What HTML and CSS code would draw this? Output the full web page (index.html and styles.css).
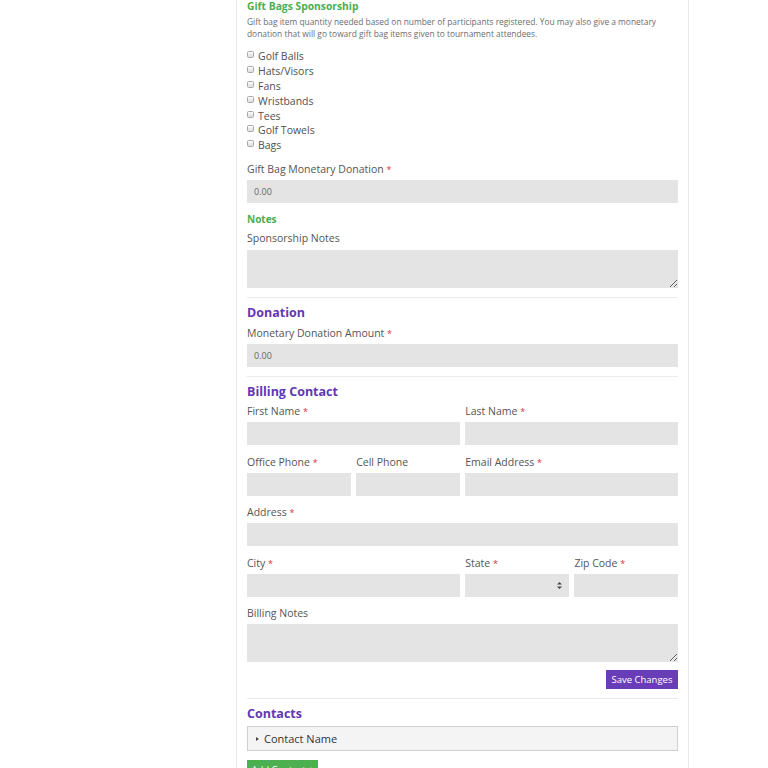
FILE: index.html
```html
<!DOCTYPE html>
<html>
<head>
<meta charset="utf-8">
<link rel="stylesheet" href="styles.css">
</head>
<body>
<div class="page">
  <aside class="side"></aside>
  <main class="panel">
    <h4 class="sub-green">Gift Bags Sponsorship</h4>
    <p class="desc">Gift bag item quantity needed based on number of participants registered. You may also give a monetary donation that will go toward gift bag items given to tournament attendees.</p>
    <ul class="checks">
      <li><span class="box"></span>Golf Balls</li>
      <li><span class="box"></span>Hats/Visors</li>
      <li><span class="box"></span>Fans</li>
      <li><span class="box"></span>Wristbands</li>
      <li><span class="box"></span>Tees</li>
      <li><span class="box"></span>Golf Towels</li>
      <li><span class="box"></span>Bags</li>
    </ul>
    <div class="group g-gift">
      <label class="lbl">Gift Bag Monetary Donation <span class="req">*</span></label>
      <input class="field" type="text" value="0.00">
    </div>
    <h5 class="sub-green small">Notes</h5>
    <div class="group g-notes">
      <label class="lbl">Sponsorship Notes</label>
      <textarea class="field area"></textarea>
    </div>
    <hr class="sep">
    <h3 class="sec">Donation</h3>
    <div class="group g-don">
      <label class="lbl">Monetary Donation Amount <span class="req">*</span></label>
      <input class="field" type="text" value="0.00">
    </div>
    <hr class="sep">
    <h3 class="sec">Billing Contact</h3>
    <div class="grid">
      <div class="group span2">
        <label class="lbl">First Name <span class="req">*</span></label>
        <input class="field" type="text">
      </div>
      <div class="group span2">
        <label class="lbl">Last Name <span class="req">*</span></label>
        <input class="field" type="text">
      </div>
      <div class="group">
        <label class="lbl">Office Phone <span class="req">*</span></label>
        <input class="field" type="text">
      </div>
      <div class="group">
        <label class="lbl">Cell Phone</label>
        <input class="field" type="text">
      </div>
      <div class="group span2">
        <label class="lbl">Email Address <span class="req">*</span></label>
        <input class="field" type="text">
      </div>
      <div class="group span4">
        <label class="lbl">Address <span class="req">*</span></label>
        <input class="field" type="text">
      </div>
      <div class="group span2">
        <label class="lbl">City <span class="req">*</span></label>
        <input class="field" type="text">
      </div>
      <div class="group">
        <label class="lbl">State <span class="req">*</span></label>
        <div class="field select">
          <svg class="arrows" width="5" height="7" viewBox="0 0 5 7"><path d="M2.5 0 L5 2.6 L0 2.6 Z M2.5 7 L5 4.4 L0 4.4 Z" fill="#444"/></svg>
        </div>
      </div>
      <div class="group">
        <label class="lbl">Zip Code <span class="req">*</span></label>
        <input class="field" type="text">
      </div>
      <div class="group span4 last">
        <label class="lbl">Billing Notes</label>
        <textarea class="field area"></textarea>
      </div>
    </div>
    <div class="actions">
      <button class="btn btn-purple">Save Changes</button>
    </div>
    <hr class="sep">
    <h3 class="sec">Contacts</h3>
    <div class="contact"><span class="tri"></span>Contact Name</div>
    <button class="btn btn-green">Add Contact +</button>
  </main>
</div>
</body>
</html>
```

FILE: styles.css
```css
* { box-sizing: border-box; }
html, body { margin: 0; padding: 0; background: #fff; }
body {
  font-family: "Open Sans", "Liberation Sans", sans-serif;
  color: #555;
  overflow: hidden;
}
.page {
  display: grid;
  grid-template-columns: 236px 453px;
  align-items: start;
}
.panel {
  border-left: 1px solid #e8e8e8;
  border-right: 1px solid #e8e8e8;
  padding: 0 10px 40px;
  min-height: 820px;
}
.sub-green {
  margin: 0;
  color: #4cae50;
  font-weight: 700;
  font-size: 10.3px;
  line-height: 13px;
}
.sub-green.small {
  font-size: 10px;
  line-height: 12px;
  margin-top: 10px;
}
.desc {
  margin: 3px 0 0;
  font-size: 8.4px;
  line-height: 12px;
  color: #6d6d6d;
}
.checks {
  list-style: none;
  margin: 9px 0 0;
  padding: 0;
}
.checks li {
  display: flex;
  align-items: center;
  height: 14.8px;
  font-size: 10.5px;
  color: #505050;
}
.box {
  width: 7px;
  height: 7px;
  border: 1px solid #a8a8a8;
  border-radius: 1.5px;
  background: linear-gradient(#fdfdfd, #dcdcdc);
  margin: -3px 4px 0 0;
  flex: none;
}
.group { display: flex; flex-direction: column; }
.lbl {
  display: block;
  font-size: 10.5px;
  line-height: 14px;
  height: 14px;
  color: #555;
  margin-bottom: 4px;
  white-space: nowrap;
}
.req { color: #e0313b; font-size: 9px; line-height: 1; }
.field {
  display: block;
  width: 100%;
  height: 23px;
  border: none;
  background: #e4e4e4;
  font-family: inherit;
  font-size: 9px;
  color: #666;
  padding: 0 7px;
  margin: 0;
  outline: none;
}
.area { height: 38px; resize: vertical; }
.g-gift { margin-top: 9.5px; }
.g-notes { margin-top: 6px; }
.g-notes .lbl { margin-bottom: 5px; }
.g-don { margin-top: 5px; }
.sep {
  border: none;
  border-top: 1px solid #ebebeb;
  margin: 9px 0 0;
  height: 0;
}
.sec {
  margin: 7px 0 0;
  color: #6237b3;
  font-size: 12.5px;
  line-height: 16px;
  font-weight: 700;
}
.grid {
  margin-top: 4px;
  display: grid;
  grid-template-columns: repeat(4, 1fr);
  column-gap: 5.5px;
}
.grid .group { margin-bottom: 9.5px; }
.grid .group.last { margin-bottom: 0; }
.span2 { grid-column: span 2; }
.span4 { grid-column: span 4; }
.select { position: relative; }
.arrows { position: absolute; right: 7px; top: 8px; }
.actions {
  display: flex;
  justify-content: flex-end;
  margin-top: 8px;
}
.btn {
  display: block;
  border: none;
  color: #fff;
  font-family: inherit;
  font-size: 9.5px;
  line-height: 19px;
  height: 19px;
  padding: 0;
  border-radius: 0;
  text-align: center;
}
.btn-purple { background: #6a3db8; width: 72px; }
.contact {
  margin-top: 4px;
  height: 25px;
  border: 1px solid #cfcfcf;
  background: #f4f4f4;
  display: flex;
  align-items: center;
  padding-left: 8px;
  font-size: 11px;
  color: #333;
}
.tri {
  width: 0; height: 0;
  border-top: 2.5px solid transparent;
  border-bottom: 2.5px solid transparent;
  border-left: 3px solid #444;
  margin-right: 5px;
}
.btn-green {
  margin-top: 9px;
  background: #4caf50;
  width: 71px;
}
```
